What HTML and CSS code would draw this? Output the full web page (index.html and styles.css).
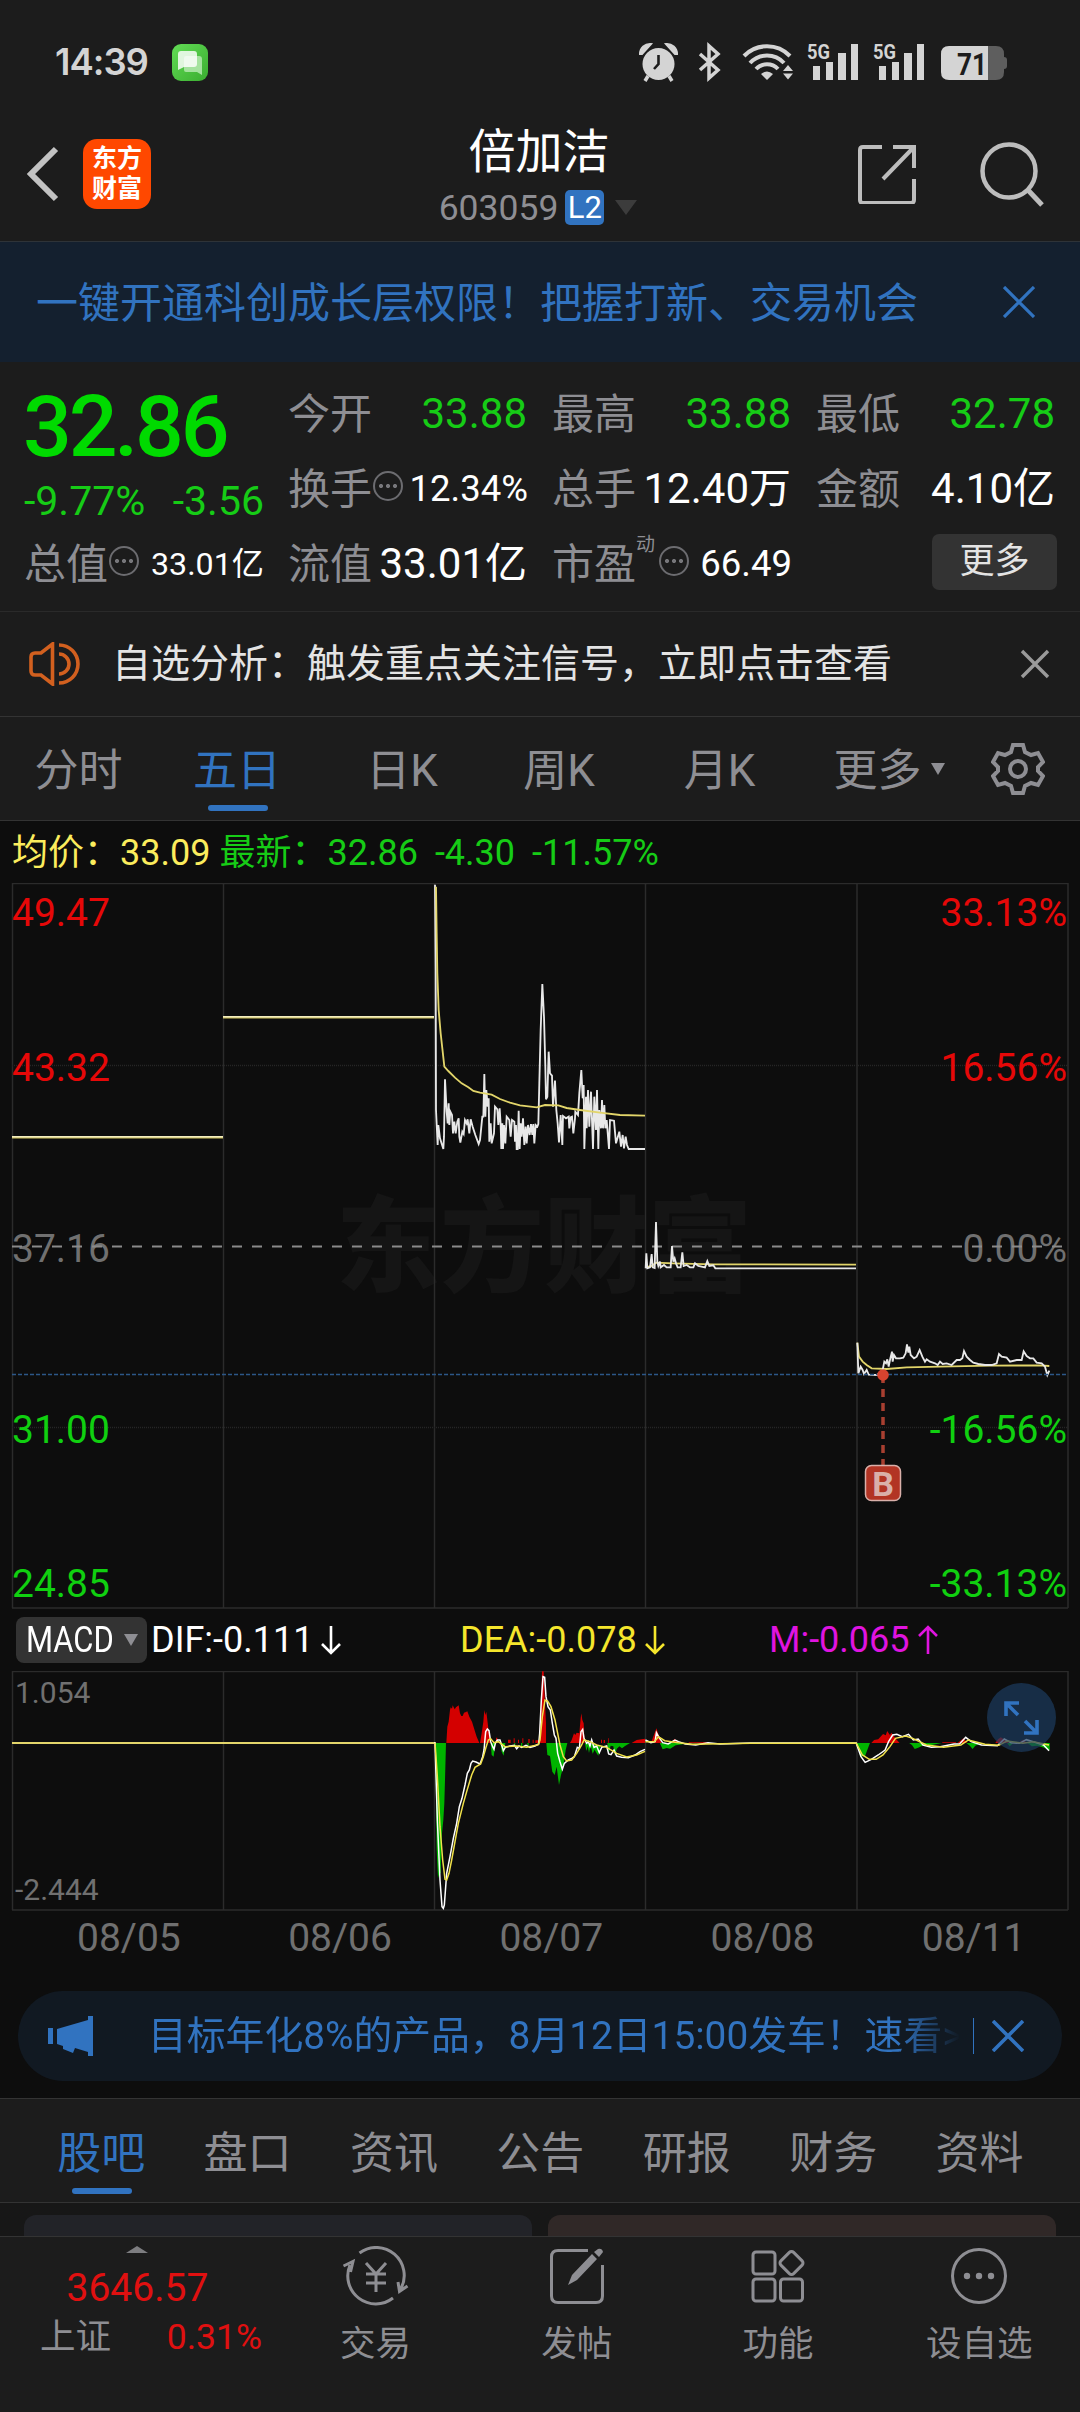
FILE: index.html
```
<!DOCTYPE html>
<html lang="zh-CN">
	<head>
		<meta charset="UTF-8" />
		<meta name="viewport" content="width=device-width, initial-scale=1.0" />
		<title>倍加洁 603059</title>
		<link rel="stylesheet" href="styles.css">
	</head>
	<body>
		<div class="status">
			<span class="status__time">14:39</span>
			<svg class="status__app" width="36" height="37" viewBox="0 0 36 37">
				<defs>
					<linearGradient id="msg" x1="0" y1="0" x2="1" y2="1">
						<stop offset="0" stop-color="#62dc55" />
						<stop offset="1" stop-color="#3aad30" />
					</linearGradient>
				</defs>
				<rect width="36" height="37" rx="9" fill="url(#msg)" />
				<path d="M14 12h13q3 0 3 3v16l-5-3H14q-2 0-2-2V14q0-2 2-2z" fill="#a5e29f" />
				<path d="M9 7h13q3 0 3 3v10q0 3-3 3H12l-6 3V10q0-3 3-3z" fill="#fff" opacity=".82" />
			</svg>
			<svg class="status__icons" width="370" height="52" viewBox="638 36 370 52" fill="#d4d4d4">
				<!-- alarm -->
				<circle cx="658.500" cy="64" r="16" />
				<path d="M640 54a10 10 0 0 1 11-10l-9 10zM677 54a10 10 0 0 0-11-10l9 10z" stroke="#d4d4d4" stroke-width="2" />
				<path d="M648 76l-3 5M669 76l3 5" stroke="#d4d4d4" stroke-width="3.500" />
				<path d="M658.500 55v9l-4.500 5" stroke="#1c1c1c" stroke-width="2.600" fill="none" />
				<!-- bluetooth -->
				<path d="M700 54l18 16-9 8V46l9 8-18 16" fill="none" stroke="#d4d4d4" stroke-width="3.500" />
				<!-- wifi -->
				<g fill="none" stroke="#d4d4d4" stroke-width="4">
					<path d="M744 56a32 32 0 0 1 46 0M750 63a23 23 0 0 1 34 0M756 69a15 15 0 0 1 22 0" />
				</g>
				<path d="M761 74q6-5 12 0l-6 6zM783 71l5-6 5 6zM783 73.500l5 6 5-6z" />
				<!-- signal -->
				<path d="M813 66h7v14h-7zM826 62h7v18h-7zM838 53h8v27h-8zM851 44h7v36h-7z" />
				<path d="M879 66h7v14h-7zM892 62h7v18h-7zM904 53h8v27h-8zM917 44h7v36h-7z" />
				<text class="status__5g" x="807" y="59" textLength="23" lengthAdjust="spacingAndGlyphs">5G</text>
				<text class="status__5g" x="873" y="59" textLength="23" lengthAdjust="spacingAndGlyphs">5G</text>
				<!-- battery -->
				<path d="M988 46h8q8 0 8 8v3q3 0 3 3v6q0 3-3 3v3q0 8-8 8h-8z" fill="#5e5e5e" />
				<path d="M949 46h39v34h-39q-8 0-8-8V54q0-8 8-8z" />
				<text class="status__battery" x="957" y="75" textLength="30" lengthAdjust="spacingAndGlyphs">71</text>
			</svg>
		</div>

		<div class="header">
			<svg class="header__back" width="34" height="56" viewBox="0 0 34 56">
				<path d="M30 3L5 28l25 25" fill="none" stroke="#c2c2c2" stroke-width="6" />
			</svg>
			<div class="header__logo">东方<br>财富</div>
			<div class="header__title">
				<h1>倍加洁</h1>
				<div class="header__code">
					603059<span class="header__level">L2</span>
					<svg width="22" height="15" viewBox="0 0 22 15"><path d="M0 0h22L11 15z" fill="#3c3c3c" /></svg>
				</div>
			</div>
			<svg class="header__share" width="60" height="60" viewBox="0 0 60 60" fill="none" stroke="#bdbdbd" stroke-width="4">
				<path d="M25 3H6Q3 3 3 6v50q0 3 3 3h48q3 0 3-3V35M36 3h21v21M57 3L26 35" />
			</svg>
			<svg class="header__search" width="66" height="66" viewBox="0 0 66 66" fill="none" stroke="#bdbdbd" stroke-width="4.500">
				<circle cx="30" cy="30" r="26.500" />
				<path d="M49 49l14 15" stroke-width="5" />
			</svg>
		</div>

		<div class="banner">
			<span>一键开通科创成长层权限！把握打新、交易机会</span>
			<svg width="32" height="32" viewBox="0 0 32 32"><path d="M1 1l30 30M31 1L1 31" stroke="#3173c0" stroke-width="3.200" /></svg>
		</div>

		<div class="quote">
			<div class="quote__main">
				<div class="quote__price">32.86</div>
				<div class="quote__change"><span>-9.77%</span><span>-3.56</span></div>
			</div>
			<div class="cell"><span class="label">今开</span><span class="down">33.88</span></div>
			<div class="cell"><span class="label">最高</span><span class="down">33.88</span></div>
			<div class="cell"><span class="label">最低</span><span class="down">32.78</span></div>
			<div class="cell"><span class="label">换手</span><i class="dots"></i><span class="mid">12.34%</span></div>
			<div class="cell"><span class="label">总手</span><span>12.40万</span></div>
			<div class="cell"><span class="label">金额</span><span>4.10亿</span></div>
			<div class="cell"><span class="label">总值</span><i class="dots"></i><span class="small">33.01亿</span></div>
			<div class="cell"><span class="label">流值</span><span>33.01亿</span></div>
			<div class="cell"><span class="label">市盈<sup>动</sup></span><i class="dots"></i><span class="mid">66.49</span></div>
			<div class="cell"><button class="quote__more">更多</button></div>
		</div>

		<div class="notice">
			<svg width="52" height="44" viewBox="0 0 52 44" fill="none" stroke="#d2601f" stroke-width="3.600">
				<path d="M23.500 2v40L12 33H6q-4 0-4-4V15q0-4 4-4h6zM30 3a19 19 0 0 1 0 38M30 12a10 10 0 0 1 0 20" />
			</svg>
			<span>自选分析：触发重点关注信号，立即点击查看</span>
			<svg width="30" height="30" viewBox="0 0 30 30"><path d="M2 2l26 26M28 2L2 28" stroke="#9a9a9a" stroke-width="3.400" /></svg>
		</div>

		<div class="periods">
			<span>分时</span>
			<span class="active">五日</span>
			<span>日K</span>
			<span>周K</span>
			<span>月K</span>
			<span>更多<svg width="14" height="12" viewBox="0 0 14 12"><path d="M0 0h14L7 12z" fill="#8e8e93" /></svg></span>
			<svg width="54" height="54" viewBox="-27 -27 54 54" fill="none" stroke="#8e8e93" stroke-width="4">
				<path d="M-5-24H5L7-17L13-14L20-16L25-7L20-2V2L25 7L20 16L13 14L7 17L5 24H-5L-7 17L-13 14L-20 16L-25 7L-20 2V-2L-25-7L-20-16L-13-14L-7-17Z" />
				<circle r="8" />
			</svg>
		</div>

		<div class="chart">
			<div class="chart__info">
				<span class="avg">均价：33.09</span>
				<span>最新：32.86</span>
				<span class="diff">-4.30</span>
				<span class="diff">-11.57%</span>
			</div>

			<svg class="chart__price" width="1080" height="726" viewBox="0 883 1080 726">
				<text class="watermark" x="336" y="1284">东方财富</text>
				<path class="grid" d="M12 883.500H1068M12 1608H1068M12.500 883V1608M223.500 883V1608M434.500 883V1608M645.500 883V1608M857 883V1608M1068 883V1608" />
				<path class="grid grid--dot" d="M12 1065.500H1068M12 1427.500H1068" />
				<text class="up" x="12" y="926">49.47</text>
				<text class="up" x="12" y="1081">43.32</text>
				<text class="flat" x="12" y="1262">37.16</text>
				<text class="low" x="12" y="1443">31.00</text>
				<text class="low" x="12" y="1597">24.85</text>
				<text class="up end" x="1067" y="926">33.13%</text>
				<text class="up end" x="1067" y="1081">16.56%</text>
				<text class="flat end" x="1067" y="1262">0.00%</text>
				<text class="low end" x="1067" y="1443">-16.56%</text>
				<text class="low end" x="1067" y="1597">-33.13%</text>
				<path d="M12 1246.500H1066" stroke="#8a8a8a" stroke-width="2" stroke-dasharray="10 10" />

				<!-- 08/05 and 08/06 -->
				<path d="M12 1137H223M223 1017H434" stroke="#f3edc0" stroke-width="2.200" />
				<path d="M12 1138H223M223 1018H434" stroke="#c9bd5a" stroke-width="1" />

				<!-- 08/07 -->
				<g transform="translate(420 870) scale(.33333)" fill="none">
					<path class="line" d="M45 44L47 300 48 720 53 825 55 765 60 805 70 837 72 800 75 628 80 725 83 760 86 700 88 765 91 725 96 735 99 790 103 755 107 790 112 755 116 745 118 800 121 818 127 785 131 792 135 750 140 760 143 748 148 790 152 748 158 770 166 795 176 822 180 810 187 740 190 740 193 612 196 740 199 660 203 710 206 685 208 815 212 760 215 820 222 790 225 710 232 718 235 765 239 715 242 765 244 837 247 760 249 837 252 765 256 820 260 740 268 750 272 800 276 750 283 755 285 815 288 765 290 837 293 837 296 722 299 837 302 760 305 800 309 745 313 825 317 770 320 820 324 765 329 795 333 762 337 795 340 762 343 820 347 765 352 770 355 762 358 640 362 480 367 342 372 440 376 590 378 688 382 680 386 545 390 610 396 617 399 710 405 632 409 720 413 760 417 817 422 735 427 825 429 738 438 745 446 740 448 775 452 742 456 740 460 790 465 745 466 725 474 735 478 670 484 600 488 685 491 645 493 837 498 680 500 775 504 660 508 770 513 665 519 837 523 680 528 780 531 660 535 837 538 720 543 775 546 690 549 775 553 705 556 775 560 750 567 837 570 750 582 752 588 820 598 785 603 830 608 795 612 835 617 800 621 825 626 837 675 837" />
					<path class="line line--avg" d="M48 50L50 190 52 310 56 420 62 490 67 535 73 590 85 603 105 623 125 640 145 652 160 663 180 668 215 674 240 687 270 698 300 706 350 712 375 705 415 706 440 714 480 720 540 728 600 735 675 737" />
				</g>

				<!-- 08/08 and 08/11 -->
				<g transform="translate(640 1180) scale(.33333)" fill="none">
					<path class="line line--avg" d="M17 262L35 258 48 248 100 250 220 253 648 254M652 488L657 530 668 545 680 555 695 565 740 567 800 562 900 560 1050 557 1200 556 1228 558" />
					<path class="line" d="M17 265L19 220 22 265 30 262 35 222 38 262 44 264 48 126 52 245 55 258 60 245 62 262 72 255 80 262 92 262 96 198 100 245 104 235 108 250 113 262 122 262 127 217 131 258 140 255 150 262 160 262 165 250 175 258 195 262 202 243 208 258 220 256 226 265 648 265" />
					<path class="line" d="M652 488L655 580 662 560 668 570 672 582 680 570 686 584 712 585 728 570 733 545 738 550 742 538 746 560 751 535 756 515 758 545 762 525 768 535 780 535 790 533 797 520 801 493 805 518 808 500 812 525 822 535 830 530 839 510 847 530 855 545 860 538 870 545 885 550 893 555 900 545 908 552 920 550 935 555 950 540 960 540 967 535 972 513 980 530 990 540 1000 548 1015 552 1035 555 1055 555 1070 550 1077 522 1085 530 1100 533 1110 545 1130 540 1145 540 1151 514 1160 528 1170 535 1180 535 1190 548 1205 550 1215 560 1222 585 1228 572" />
				</g>

				<path d="M12 1374.500H1066" stroke="#2c5788" stroke-width="1.600" stroke-dasharray="4 2" />
				<!-- buy marker -->
				<path d="M883 1375V1465" stroke="#a83f30" stroke-width="3.500" stroke-dasharray="8 6" />
				<circle cx="883" cy="1375" r="5.800" fill="#d6432f" />
				<rect x="865.500" y="1465.500" width="35" height="35" rx="6" fill="#b23424" stroke="#d9b0aa" stroke-width="1.500" />
				<text class="marker" x="883" y="1495.500">B</text>
			</svg>

			<div class="macd">
				<div class="macd__name"><span>MACD</span><svg width="14" height="12" viewBox="0 0 14 12"><path d="M0 0h14L7 12z" fill="#8e8e93" /></svg></div>
				<div class="macd__dif">DIF:-0.111<svg class="arrow" width="20" height="30" viewBox="0 0 20 30"><path d="M10 1v27M1 19l9 9 9-9" /></svg></div>
				<div class="macd__dea">DEA:-0.078<svg class="arrow" width="20" height="30" viewBox="0 0 20 30"><path d="M10 1v27M1 19l9 9 9-9" /></svg></div>
				<div class="macd__m">M:-0.065<svg class="arrow" width="20" height="30" viewBox="0 0 20 30"><path d="M10 29V2M1 11l9-9 9 9" /></svg></div>
			</div>

			<svg class="chart__macd" width="1080" height="241" viewBox="0 1671 1080 241">
				<path class="grid" d="M12 1671.500H1068M12 1910H1068M12.500 1671V1910M223.500 1671V1910M434.500 1671V1910M645.500 1671V1910M857 1671V1910M1068 1671V1910" />
				<text class="flat flat--small" x="15" y="1703">1.054</text>
				<text class="flat flat--small" x="15" y="1900">-2.444</text>

				<g transform="translate(420 1660) scale(.33333)">
					<path fill="#00b400" d="M46 249L50 570 54 655 58 640 62 640 66 520 70 480 73 430 75 360 78 249zM212 249l3 36 6 5 5-41zM241 249l4 26 6 12 5-38zM379 249l3 36 8 3 7 47 7 10 6-25 7 55 6-30 7-25 7-50 5-21zM495 249l4 24 4-14 4 20 5-22 6 24 6-12 4 8 7 10 6-30zM562 249l4 32 6-24 8 2 5 28 5-20 8-8 8 6 8-6 16-10zM283 249v12h3v-12zM303 249v10h4v-10zM322 249v8h4v-8z" />
					<path fill="#d40000" d="M79 249L82 200 86 185 90 150 92 142 96 146 98 136 104 148 108 142 116 136 120 160 124 168 128 168 132 158 138 156 142 154 148 170 156 185 162 205 170 230 178 249zM180 249L185 220 190 185 193 150 196 165 199 155 205 205 212 249zM357 249L362 150 366 34 371 34 375 130 378 190 378 249zM450 249L455 240 462 220 466 225 470 218 478 220 482 175 484 160 487 180 491 190 494 249zM228 249v-16h4v16zM264 249v-10h8v10zM281 249v-14h3v14zM294 249v-10h3v10zM307 249v-14h3v14zM325 249v-12h4v12zM338 249v-10h3v10zM346 249v-8h10v8zM543 249v-10h3v10zM551 249v-9h4v9zM565 249v-14h2v14zM635 249L650 240 675 236V249z" />
					<path class="thin" d="M0 248L45 248 52 480 60 660 66 740 70 745 73 735 80 640 90 590 100 535 110 490 118 440 126 415 135 375 142 340 148 330 153 310 158 303 168 306 180 312 188 290 192 270 197 215 202 207 207 212 212 245 218 260 222 268 226 250 232 240 240 240 247 262 250 272 256 262 270 258 283 256 290 266 297 258 305 262 318 256 330 262 345 258 356 252 359 220 364 120 369 50 374 52 378 110 384 140 391 150 397 190 403 225 408 235 413 280 420 305 427 328 433 310 445 300 455 295 463 290 472 262 478 265 483 215 488 208 492 235 500 250 505 245 510 258 515 240 522 262 530 258 538 278 545 262 560 258 566 282 573 284 582 270 590 288 605 292 625 293 645 285 660 275 675 268" />
					<path class="thin thin--dea" d="M45 248L52 350 60 500 68 600 75 658 80 660 87 640 95 600 105 545 115 490 130 430 140 395 155 345 165 322 182 312 190 290 198 262 205 240 212 236 222 248 235 245 255 260 290 258 320 262 355 254 360 240 367 170 375 120 383 123 393 140 405 180 412 215 420 255 430 290 440 303 455 300 470 280 485 255 492 240 510 245 530 255 560 262 590 280 620 291 650 285 675 274" />
				</g>
				<g transform="translate(0 1590) scale(.6888 .33333)">
					<path fill="#00b400" d="M958 459l4 19 6-4 5 2 8-10 10-3 9-4zM1244 459l5 41 7-3 7-38zM1320 459l4 6 4 12 5-4 6-6 14-2 14-6zM1403 459l5 8 4 10 4-10 8-8zM1462 459l4 10 5-10zM1492 459l6 10 8-2 10 6 8 8v-22z" />
					<path fill="#d40000" d="M945 459L953 415 957 440 960 459zM975 459l4-13 6 13zM1000 457h28v2h-28zM1265 459L1269 450 1275 448 1282 432 1286 436 1288 423 1292 435 1294 428 1300 445 1306 459zM1368 457h20v2h-20zM1390 459l9-14 5 14zM1445 459L1449 448 1453 442 1465 459zM1478 459l8-10 5 10z" />
					<path class="thin" d="M937 450L945 458 951 455 953 428 956 440 962 458 970 462 980 450 985 455 995 462 1010 465 1028 458 1045 462 1090 459 1243 459 1250 500 1256 517 1265 508 1275 495 1285 480 1290 455 1296 435 1302 433 1310 440 1319 433 1326 450 1333 447 1340 465 1352 472 1365 470 1385 462 1393 462 1402 442 1410 455 1425 465 1448 467 1458 447 1468 458 1480 460 1490 449 1505 458 1515 465 1523 482" />
					<path class="thin thin--dea" d="M937 455L950 455 956 440 965 452 985 458 1005 463 1090 460 1243 459 1252 495 1262 508 1272 508 1282 495 1292 470 1300 445 1315 438 1325 445 1345 465 1370 472 1395 465 1406 450 1430 463 1450 466 1462 453 1485 460 1500 455 1523 465" />
				</g>
				<path d="M12 1743H434" stroke="#e2d56a" stroke-width="2" />

				<circle cx="1021.500" cy="1717.500" r="34.500" fill="#1d3c60" fill-opacity=".7" />
				<path d="M1006 1716V1703H1019M1006 1703L1018 1715M1037 1720V1733H1024M1037 1733L1025 1721" fill="none" stroke="#3173c0" stroke-width="3.600" />
			</svg>

			<div class="dates">
				<span>08/05</span><span>08/06</span><span>08/07</span><span>08/08</span><span>08/11</span>
			</div>

			<div class="promo">
				<svg width="46" height="40" viewBox="0 0 46 40" fill="#3173c0">
					<path d="M0 12h5v16H0zM9 13L40 4V0h5v40h-5v-4l-13-4-2 5-10-4v-3l-6-2z" />
				</svg>
				<span class="promo__text">目标年化8%的产品，8月12日15:00发车！速看&gt;</span>
				<i class="promo__line"></i>
				<svg width="32" height="32" viewBox="0 0 32 32"><path d="M1 1l30 30M31 1L1 31" stroke="#3173c0" stroke-width="3.600" /></svg>
			</div>
		</div>

		<div class="tabs">
			<span class="active">股吧</span>
			<span>盘口</span>
			<span>资讯</span>
			<span>公告</span>
			<span>研报</span>
			<span>财务</span>
			<span>资料</span>
		</div>

		<div class="cards">
			<div class="card card--blue"></div>
			<div class="card card--brown"></div>
		</div>

		<div class="bottom">
			<div class="bottom__index">
				<svg width="22" height="7" viewBox="0 0 22 7"><path d="M0 7h22L11 0z" fill="#7d7d80" /></svg>
				<div class="bottom__value">3646.57</div>
				<div class="bottom__row"><span>上证</span><span class="bottom__pct">0.31%</span></div>
			</div>
			<div class="bottom__item">
				<svg width="68" height="60" viewBox="0 0 68 60" fill="none" stroke="#8e8e93" stroke-width="3">
					<path d="M17.500 7A28 28 0 0 1 59 42.500M51 52A28 28 0 0 1 8 19M1.500 20L11 15.500 8.500 26M56 36L57.500 45.500 65.500 40" />
					<path d="M24 17L34 28 44 17M34 28V46M24 28H44M24 37H44" />
				</svg>
				<span>交易</span>
			</div>
			<div class="bottom__item">
				<svg width="66" height="60" viewBox="0 0 66 60" fill="none" stroke="#8e8e93" stroke-width="3">
					<path d="M44 4.500H14Q7.500 4.500 7.500 11V50Q7.500 56.500 14 56.500H52Q58.500 56.500 58.500 50V19" />
					<path d="M24 39L28 29 48 8 53 13 33 34zM50 6L54 3Q58 2 59 6L55 11z" fill="#8e8e93" stroke="none" />
				</svg>
				<span>发帖</span>
			</div>
			<div class="bottom__item">
				<svg width="66" height="60" viewBox="0 0 66 60" fill="none" stroke="#8e8e93" stroke-width="3">
					<rect x="8" y="6" width="22" height="22" rx="3" />
					<rect x="8" y="33" width="22" height="22" rx="3" />
					<rect x="35.500" y="33" width="22" height="22" rx="3" />
					<rect x="37.500" y="8" width="18" height="18" rx="3" transform="rotate(45 46.500 17)" />
				</svg>
				<span>功能</span>
			</div>
			<div class="bottom__item">
				<svg width="66" height="60" viewBox="0 0 66 60" fill="#8e8e93">
					<circle cx="33" cy="30" r="26.500" fill="none" stroke="#8e8e93" stroke-width="3" />
					<circle cx="21" cy="30" r="3.200" />
					<circle cx="33" cy="30" r="3.200" />
					<circle cx="45" cy="30" r="3.200" />
				</svg>
				<span>设自选</span>
			</div>
		</div>
	</body>
</html>
```

FILE: styles.css
```
* {
	box-sizing: border-box;
	margin: 0;
	padding: 0;
}

body {
	width: 1080px;
	height: 2412px;
	overflow: hidden;
	font-family: Roboto, "Noto Sans CJK SC", sans-serif;
	background-color: #1c1c1c;
	color: #fff;
}

svg {
	display: block;
	flex: none;
}

span {
	white-space: nowrap;
}

/* status bar */
.status {
	display: flex;
	align-items: center;
	height: 124px;
	padding: 0 72px 0 55px;
}

.status__time {
	width: 117px;
	font-family: Inter, sans-serif;
	font-size: 36.5px;
	font-weight: 600;
	letter-spacing: -1px;
	color: #d4d4d4;
}

.status__icons {
	margin-left: auto;
}

.status__5g {
	font-size: 21px;
	font-weight: 700;
}

.status__battery {
	font-size: 32px;
	font-weight: 700;
	fill: #1c1c1c;
}

/* header */
.header {
	display: flex;
	align-items: center;
	height: 118px;
	padding: 0 35px 17px 26px;
	border-bottom: 1px solid #2e3338;
}

.header__logo {
	width: 68px;
	height: 70px;
	margin-left: 23px;
	padding-top: 5px;
	border-radius: 14px;
	background-color: #ff4800;
	font-size: 25px;
	font-weight: 700;
	line-height: 30px;
	text-align: center;
}

.header__title {
	width: 300px;
	margin-left: 238px;
	text-align: center;
}

h1 {
	height: 60px;
	font-size: 47px;
	font-weight: 400;
	line-height: 57px;
}

.header__code {
	display: flex;
	align-items: center;
	justify-content: center;
	height: 40px;
	margin: 5px 2px -2px 0;
	font-size: 35.5px;
	line-height: 40px;
	color: #8e8e93;
}

.header__level {
	width: 39px;
	height: 35px;
	margin: 0 11px 0 7px;
	border-radius: 5px;
	background-color: #3173c0;
	color: #fff;
	font-size: 31px;
	line-height: 35px;
}

.header__share {
	margin-left: 168px;
}

.header__search {
	margin-left: auto;
}

/* blue banner */
.banner {
	display: flex;
	align-items: center;
	justify-content: space-between;
	height: 120px;
	padding: 0 45px 0 36px;
	background-color: #14202f;
	font-size: 42px;
	color: #3173c0;
}

.banner span {
	padding-top: 3px;
	line-height: 60px;
}

/* quote */
.quote {
	display: grid;
	grid-template-columns: repeat(4, 238px);
	grid-template-rows: repeat(3, 75px);
	column-gap: 26px;
	height: 250px;
	padding: 14px 0 0 25px;
	border-bottom: 1px solid #2a2a2a;
	font-size: 42px;
}

.quote__main {
	grid-row: span 2;
}

.quote__price {
	height: 99px;
	margin-left: -2px;
	padding-top: 2px;
	font-size: 86px;
	font-weight: 500;
	line-height: 98px;
	letter-spacing: -3.2px;
	color: #00da00;
}

.quote__change {
	display: flex;
	justify-content: space-between;
	margin: 0 -1px 0 -1px;
	font-size: 41px;
	line-height: 52px;
	color: #16cc16;
}

.cell {
	display: flex;
	align-items: center;
	justify-content: space-between;
	line-height: 60px;
}

.label {
	position: relative;
	margin-left: -1px;
	padding-top: 3px;
	color: #8e8e93;
}

.label sup {
	position: absolute;
	left: 84px;
	top: -17px;
	font-size: 19px;
}

.down {
	color: #16cc16;
}

.mid {
	margin-right: -1px;
	font-size: 36.5px;
}

.small {
	margin-right: -1px;
	font-size: 32.2px;
}

.dots {
	width: 30px;
	height: 30px;
	margin: -6px auto 0 1px;
	border: 2px solid #6c6c70;
	border-radius: 50%;
	background:
		radial-gradient(circle at 6px 13px, #77777b 1.8px, transparent 2.3px),
		radial-gradient(circle at 13px 13px, #77777b 1.8px, transparent 2.3px),
		radial-gradient(circle at 20px 13px, #77777b 1.8px, transparent 2.3px);
}

.label:has(sup) + .dots {
	margin-left: 23px;
}

.quote__more {
	width: 125px;
	height: 56px;
	margin: -4px -2px 0 auto;
	border: none;
	border-radius: 7px;
	background-color: #333;
	color: #e4e4e4;
	font-family: inherit;
	font-size: 35px;
	line-height: 56px;
}

/* notice */
.notice {
	display: flex;
	align-items: center;
	height: 105px;
	padding: 0 30px 1px 29px;
	border-bottom: 1px solid #333;
	font-size: 39px;
	color: #e4e4e4;
}

.notice span {
	flex: 1;
	padding: 1px 0 0 31px;
	line-height: 60px;
}

/* periods */
.periods {
	display: grid;
	grid-template-columns: 157px 160px 170px 144px 177px 162px 96px;
	align-items: center;
	justify-items: center;
	height: 104px;
	border-bottom: 1px solid #333;
	font-size: 44px;
	color: #8e8e93;
}

.periods span {
	display: flex;
	align-items: center;
	height: 103px;
	padding-top: 4px;
	line-height: 60px;
}

.periods span svg {
	margin: -4px 0 0 9px;
}

.active {
	position: relative;
	color: #3173c0;
}

.active::after {
	content: "";
	position: absolute;
	left: 50%;
	bottom: 9px;
	width: 60px;
	height: 6px;
	margin-left: -29px;
	border-radius: 3px;
	background-color: #3173c0;
}

/* chart */
.chart {
	height: 1277px;
	background-color: #0d0d0d;
}

.chart__info {
	display: flex;
	height: 62px;
	padding-left: 12px;
	font-size: 36px;
	line-height: 64px;
	color: #16cc16;
}

.chart__info .avg {
	margin-right: 9px;
	color: #fbec5d;
}

.chart__info .diff {
	margin-left: 17px;
}

.chart text {
	font-size: 39px;
}

.chart .watermark {
	font-family: "Noto Sans CJK SC", sans-serif;
	font-size: 104px;
	font-weight: 900;
	fill: #151515;
}

.grid {
	fill: none;
	stroke: #2b2b2b;
	stroke-width: 1.5;
}

.grid--dot {
	stroke: #262626;
	stroke-dasharray: 1 1;
}

.up {
	fill: #e60808;
}

.low {
	fill: #10d010;
}

.flat {
	fill: #707070;
}

.chart .flat--small {
	font-size: 30px;
}

.end {
	text-anchor: end;
}

.line {
	stroke: #e8e8e8;
	stroke-width: 5.5;
}

.line--avg {
	stroke: #e2d56a;
}

.thin {
	fill: none;
	stroke: #fff;
	stroke-width: 1.5;
	vector-effect: non-scaling-stroke;
}

.thin--dea {
	stroke: #f0e14a;
}

.chart .marker {
	font-size: 34px;
	font-weight: 700;
	fill: #d9b0aa;
	text-anchor: middle;
}

.macd {
	display: flex;
	align-items: center;
	height: 62px;
	padding-left: 16px;
	font-size: 36px;
}

.macd div {
	display: flex;
	align-items: center;
}

.macd .macd__name {
	width: 131px;
	height: 46px;
	padding: 0 9px 0 10px;
	justify-content: space-between;
	border-radius: 8px;
	background-color: #333;
}

/* squeezed so the name fits its button */
.macd__name span {
	width: 86px;
	transform: scaleX(0.86);
	transform-origin: left;
}

.macd__dif {
	width: 311px;
	padding-left: 4px;
}

.macd__dea {
	width: 310px;
	padding-left: 2px;
	color: #f5e62c;
}

.macd__m {
	padding-left: 1px;
	color: #e014e0;
}

.arrow {
	margin-left: 8px;
	fill: none;
	stroke: currentColor;
	stroke-width: 2.6;
}

.dates {
	display: grid;
	grid-template-columns: repeat(5, 211.2px);
	height: 79px;
	padding-left: 77px;
	font-size: 39px;
	line-height: 52px;
	color: #707070;
}

.promo {
	display: flex;
	align-items: center;
	width: 1044px;
	height: 90px;
	margin-left: 18px;
	padding: 0 38px 0 30px;
	border-radius: 45px;
	background-color: #111922;
	color: #3173c0;
}

.promo__text {
	width: 812px;
	margin-left: 54px;
	overflow: hidden;
	font-size: 38.8px;
	line-height: 60px;
	-webkit-mask-image: linear-gradient(to right, #000 750px, transparent 812px);
	mask-image: linear-gradient(to right, #000 750px, transparent 812px);
}

.promo__line {
	width: 1px;
	height: 36px;
	margin: 0 18px 0 14px;
	background-color: #3173c0;
}

/* lower tabs */
.tabs {
	display: grid;
	grid-template-columns: repeat(7, 146.4px);
	height: 105px;
	padding-left: 28px;
	border-top: 1px solid #333;
	border-bottom: 1px solid #333;
	font-size: 44px;
	line-height: 110px;
	text-align: center;
	color: #8e8e93;
}

.tabs .active::after {
	bottom: 15px;
}

.cards {
	display: flex;
	gap: 16px;
	height: 33px;
	padding: 12px 24px 0;
	background-color: #171717;
}

.card {
	flex: 1;
	border-radius: 12px 12px 0 0;
}

.card--blue {
	background-color: #222328;
}

.card--brown {
	background-color: #302827;
}

/* bottom bar */
.bottom {
	display: flex;
	height: 176px;
	border-top: 1px solid #333;
	font-size: 35.5px;
	color: #8e8e93;
}

.bottom__index {
	display: flex;
	flex-direction: column;
	align-items: center;
	width: 275px;
	padding-top: 9px;
}

.bottom__value {
	margin-top: 11px;
	font-size: 39px;
	line-height: 48px;
	color: #e01010;
}

.bottom__row {
	display: flex;
	align-self: flex-start;
	justify-content: space-between;
	width: 222px;
	margin-left: 40px;
	line-height: 51px;
}

.bottom__pct {
	color: #e01010;
}

.bottom__item {
	display: flex;
	flex-direction: column;
	align-items: center;
	width: 201.4px;
	padding-top: 9px;
}

.bottom__item span {
	margin-top: 13px;
	line-height: 51px;
}
```
